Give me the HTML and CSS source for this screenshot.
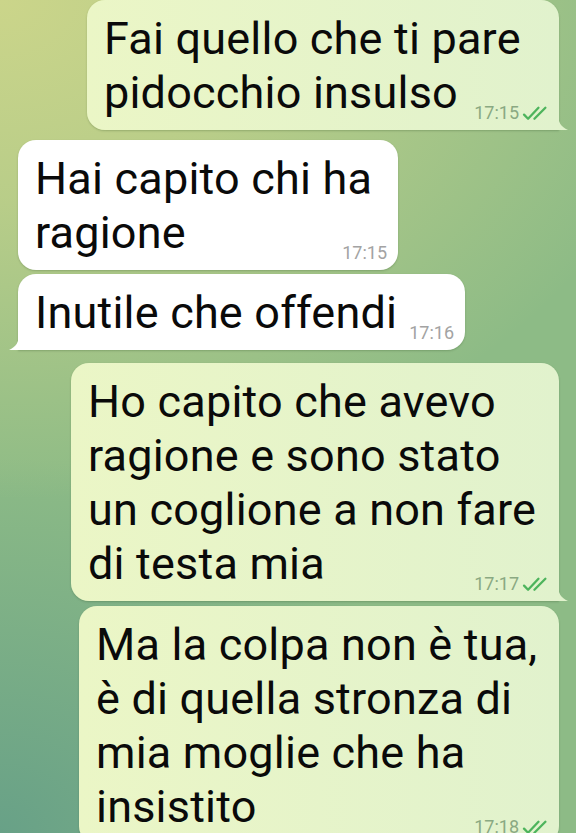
FILE: index.html
```html
<!DOCTYPE html>
<html lang="it">

<head>
    <meta charset="UTF-8">
    <meta name="viewport" content="width=device-width, initial-scale=1.0">
    <title>Chat</title>
    <link rel="stylesheet" href="styles.css">
</head>

<body>
    <div class="chat">
        <!-- Outgoing -->
        <div class="msg out tailed m1">
            <p class="text">Fai quello che ti pare<br>pidocchio insulso</p>
            <span class="meta"><span class="time">17:15</span>
                <svg class="checks" viewBox="0 0 22 13"><path d="M1.5 7.5 L5 11 L14 1.5 M10.5 11 L20 1.5" /></svg>
            </span>
            <svg class="tail" viewBox="0 0 10 16"><path d="M0 0 C0 8 3 13 10 16 L0 16 Z" /></svg>
        </div>

        <!-- Incoming -->
        <div class="msg in m2">
            <p class="text">Hai capito chi ha<br>ragione</p>
            <span class="meta"><span class="time">17:15</span></span>
        </div>

        <div class="msg in tailed m3">
            <p class="text">Inutile che offendi</p>
            <span class="meta"><span class="time">17:16</span></span>
            <svg class="tail" viewBox="0 0 10 16"><path d="M10 0 C10 8 7 13 0 16 L10 16 Z" /></svg>
        </div>

        <!-- Outgoing -->
        <div class="msg out tailed m4">
            <p class="text">Ho capito che avevo<br>ragione e sono stato<br>un coglione a non fare<br>di testa mia</p>
            <span class="meta"><span class="time">17:17</span>
                <svg class="checks" viewBox="0 0 22 13"><path d="M1.5 7.5 L5 11 L14 1.5 M10.5 11 L20 1.5" /></svg>
            </span>
            <svg class="tail" viewBox="0 0 10 16"><path d="M0 0 C0 8 3 13 10 16 L0 16 Z" /></svg>
        </div>

        <div class="msg out m5">
            <p class="text">Ma la colpa non è tua,<br>è di quella stronza di<br>mia moglie che ha<br>insistito</p>
            <span class="meta"><span class="time">17:18</span>
                <svg class="checks" viewBox="0 0 22 13"><path d="M1.5 7.5 L5 11 L14 1.5 M10.5 11 L20 1.5" /></svg>
            </span>
        </div>
    </div>
</body>

</html>
```

FILE: styles.css
```css
/* Page + wallpaper */
body {
    margin: 0;
    height: 833px;
    overflow: hidden;
    font-family: Roboto, 'Noto Sans', sans-serif;
    background-color: #8dbb86;
    background-image:
        radial-gradient(ellipse 120% 60% at 0% 0%, #cbd58a 0%, rgba(203, 213, 138, 0.7) 40%, rgba(203, 213, 138, 0) 100%),
        radial-gradient(ellipse 80% 45% at 0% 100%, #68a187 0%, rgba(104, 161, 135, 0.5) 50%, rgba(104, 161, 135, 0) 100%);
}

.chat {
    display: flex;
    flex-direction: column;
}

/* Bubbles */
.msg {
    position: relative;
    box-sizing: border-box;
    padding: 12px 12px 10px 17px;
    border-radius: 18px;
    box-shadow: 0 1px 2px rgba(40, 70, 30, 0.25);
}

.msg.out {
    align-self: flex-end;
    margin-right: 17px;
    background: linear-gradient(to right, #ebf6c6, #e1f2cd);
}

.msg.in {
    align-self: flex-start;
    margin-left: 18px;
    background-color: #ffffff;
}

.msg.out.tailed {
    border-bottom-right-radius: 0;
}

.msg.in.tailed {
    border-bottom-left-radius: 0;
}

.text {
    margin: 0;
    font-size: 45px;
    line-height: 54px;
    letter-spacing: 0.2px;
    color: #0a0a0a;
    white-space: nowrap;
}

/* Timestamp + ticks */
.meta {
    position: absolute;
    right: 11px;
    bottom: 8px;
    display: flex;
    align-items: center;
    gap: 3px;
    font-size: 18px;
    line-height: 18px;
}

.out .time {
    color: #8aa982;
}

.in .time {
    color: #a3a3a3;
}

.checks {
    width: 26px;
    height: 15px;
    fill: none;
    stroke: #4db45c;
    stroke-width: 2;
    stroke-linecap: round;
    stroke-linejoin: round;
}

/* Bubble tails */
.tail {
    position: absolute;
    bottom: 0;
    width: 10px;
    height: 16px;
}

.out .tail {
    right: -9px;
    fill: #e1f2cd;
}

.in .tail {
    left: -9px;
    fill: #ffffff;
}

/* Individual messages */
.m1 {
    width: 472px;
    margin-top: 0;
}

.m2 {
    width: 380px;
    margin-top: 10px;
}

.m3 {
    width: 447px;
    margin-top: 4px;
}

.m4 {
    width: 488px;
    margin-top: 13px;
}

.m5 {
    width: 480px;
    margin-top: 5px;
}
```
